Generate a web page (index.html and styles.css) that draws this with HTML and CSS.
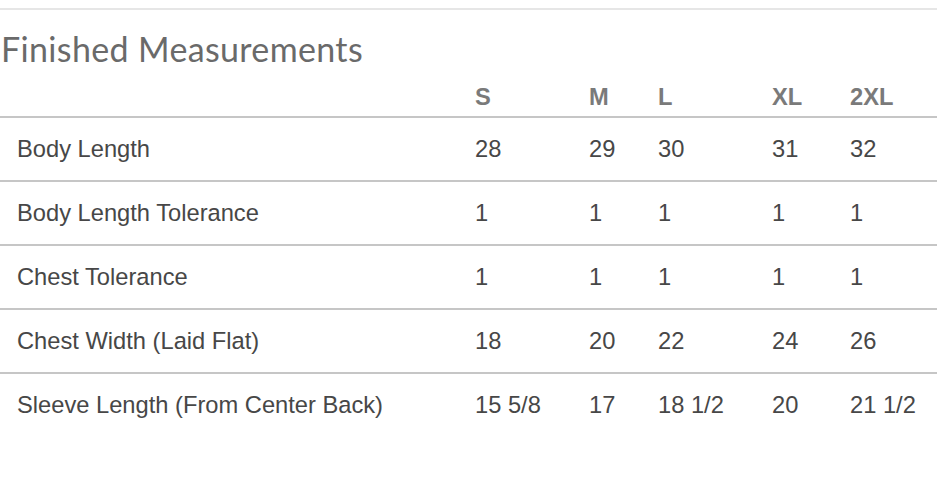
FILE: index.html
```html
<!DOCTYPE html>
<html lang="en">
<head>
<meta charset="utf-8">
<title>Finished Measurements</title>
<link rel="stylesheet" href="styles.css">
</head>
<body>
<section class="measure">
  <h2 class="title">Finished Measurements</h2>
  <table class="sizes">
    <colgroup>
      <col class="c-label"><col class="c-s"><col class="c-m"><col class="c-l"><col class="c-xl"><col class="c-2xl">
    </colgroup>
    <thead>
      <tr><th></th><th>S</th><th>M</th><th>L</th><th>XL</th><th>2XL</th></tr>
    </thead>
    <tbody>
      <tr><td>Body Length</td><td>28</td><td>29</td><td>30</td><td>31</td><td>32</td></tr>
      <tr><td>Body Length Tolerance</td><td>1</td><td>1</td><td>1</td><td>1</td><td>1</td></tr>
      <tr><td>Chest Tolerance</td><td>1</td><td>1</td><td>1</td><td>1</td><td>1</td></tr>
      <tr><td>Chest Width (Laid Flat)</td><td>18</td><td>20</td><td>22</td><td>24</td><td>26</td></tr>
      <tr><td>Sleeve Length (From Center Back)</td><td>15 5/8</td><td>17</td><td>18 1/2</td><td>20</td><td>21 1/2</td></tr>
    </tbody>
  </table>
</section>
</body>
</html>
```
FILE: styles.css
```css
html, body {
  margin: 0;
  padding: 0;
  background: #ffffff;
}

.measure {
  margin-top: 8px;
  border-top: 2px solid #e6e6e6;
}

.title {
  margin: 0;
  padding: 21px 0 0 1px;
  font-family: Lato, "Noto Sans", sans-serif;
  font-weight: 400;
  font-size: 34px;
  line-height: 36px;
  color: #6a6a6a;
  letter-spacing: 0.35px;
}

.sizes {
  width: 100%;
  border-collapse: collapse;
  table-layout: fixed;
  font-family: "Liberation Sans", Arial, sans-serif;
  font-size: 23.7px;
  color: #474747;
}

.c-label { width: 458px; }
.c-s { width: 114px; }
.c-m { width: 69px; }
.c-l { width: 114px; }
.c-xl { width: 78px; }

.sizes th {
  text-align: left;
  font-weight: 700;
  color: #7a7a7a;
  padding: 0 0 5px 17px;
  height: 44px;
  vertical-align: bottom;
  line-height: 28px;
}

.sizes thead tr {
  border-bottom: 2px solid #c6c6c6;
}

.sizes td {
  padding: 0 0 0 17px;
  height: 62px;
  line-height: 28px;
  vertical-align: middle;
  white-space: nowrap;
}

.sizes tbody tr {
  border-bottom: 2px solid #c6c6c6;
}

.sizes tbody tr:last-child {
  border-bottom: 0;
}
```
